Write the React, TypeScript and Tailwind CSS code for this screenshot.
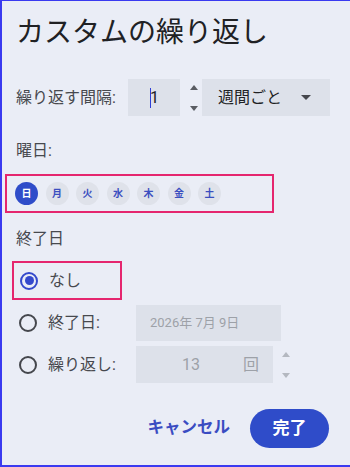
import React from 'react';

const days = ['日', '月', '火', '水', '木', '金', '土'];

function Spinner({ light }: { light?: boolean }) {
  const c = light ? '#b4b8c0' : '#5a5d63';
  return (
    <div className="flex flex-col items-center justify-between h-[26px] w-[12px]">
      <svg width="8" height="5" viewBox="0 0 8 5">
        <path d="M0 5 L4 0 L8 5 Z" fill={c} />
      </svg>
      <svg width="8" height="5" viewBox="0 0 8 5">
        <path d="M0 0 L4 5 L8 0 Z" fill={c} />
      </svg>
    </div>
  );
}

function Radio({ checked }: { checked?: boolean }) {
  if (checked) {
    return (
      <div className="w-[18px] h-[18px] rounded-full border-2 border-[#3449cc] flex items-center justify-center">
        <div className="w-[9px] h-[9px] rounded-full bg-[#3449cc]" />
      </div>
    );
  }
  return <div className="w-[18px] h-[18px] rounded-full border-2 border-[#45474d]" />;
}

export default function App() {
  return (
    <div
      className="w-[350px] h-[467px] bg-[#eaedf6] border-l-2 border-t border-b-2 border-[#3a3af0] text-[#47494e] overflow-hidden"
      style={{ fontFamily: 'Roboto, "Noto Sans CJK JP", "Noto Sans", sans-serif' }}
    >
      <div className="flex flex-col pl-[14px] pt-[16px]">
        {/* Title */}
        <h1 className="text-[28px] leading-[32px] text-[#202124] font-normal">カスタムの繰り返し</h1>

        {/* Interval */}
        <div className="flex items-center mt-[30px] h-[37px]">
          <span className="text-[16px] w-[112px]">繰り返す間隔:</span>
          <div className="w-[52px] h-[37px] bg-[#dde1ea] flex items-center pl-[22px] text-[16px] text-[#202124]">
            <span className="w-px h-[20px] bg-[#2f3fd8]" />
            <span className="-ml-px">1</span>
          </div>
          <div className="ml-[8px] mr-[2px]">
            <Spinner />
          </div>
          <div className="w-[128px] h-[37px] bg-[#dde1ea] flex items-center justify-between pl-[16px] pr-[19px] text-[16px] text-[#202124]">
            <span>週間ごと</span>
            <svg width="10" height="5" viewBox="0 0 10 5">
              <path d="M0 0 L5 5 L10 0 Z" fill="#45474d" />
            </svg>
          </div>
        </div>

        {/* Weekdays */}
        <div className="mt-[23px] text-[16px] leading-[24px]">曜日:</div>
        <div className="mt-[11px] -ml-[11px] w-[269px] h-[39px] border-2 border-[#e5266e] flex items-center gap-[7.5px] pl-[8px]">
          {days.map((d, i) => (
            <div
              key={d}
              className={
                i === 0
                  ? 'w-[23px] h-[23px] rounded-full bg-[#2f4cc9] text-white flex items-center justify-center text-[10px] font-bold'
                  : 'w-[23px] h-[23px] rounded-full bg-[#dfe2ea] text-[#3b4fc0] flex items-center justify-center text-[10px] font-bold'
              }
            >
              {d}
            </div>
          ))}
        </div>

        {/* End date */}
        <div className="mt-[14px] text-[16px] leading-[24px]">終了日</div>
        <div className="mt-[10px] -ml-[4px] w-[110px] h-[39px] border-2 border-[#e5266e] flex items-center pl-[6px] gap-[11px]">
          <Radio checked />
          <span className="text-[16px]">なし</span>
        </div>

        <div className="flex items-center mt-[5px] h-[36px]">
          <div className="ml-[3px]">
            <Radio />
          </div>
          <span className="text-[16px] ml-[11px] w-[88px]">終了日:</span>
          <div className="w-[145px] h-[36px] bg-[#dde1ea] flex items-center pl-[14px] text-[13px] text-[#9da1a8]">
            2026年 7月 9日
          </div>
        </div>

        <div className="flex items-center mt-[5px] h-[37px]">
          <div className="ml-[3px]">
            <Radio />
          </div>
          <span className="text-[16px] ml-[11px] w-[88px]">繰り返し:</span>
          <div className="w-[137px] h-[37px] bg-[#dde1ea] flex items-center text-[16px] text-[#9da1a8]">
            <span className="ml-[46px]">13</span>
            <span className="ml-auto mr-[14px] text-[16px]">回</span>
          </div>
          <div className="ml-[7px]">
            <Spinner light />
          </div>
        </div>

        {/* Actions */}
        <div className="flex items-center justify-end mt-[26px] pr-[21px] gap-[20px]">
          <button className="text-[16.5px] font-bold text-[#3a4cc2]">キャンセル</button>
          <button className="w-[79px] h-[39px] rounded-full bg-[#2f4cc9] text-white text-[17px] font-bold">完了</button>
        </div>
      </div>
    </div>
  );
}
